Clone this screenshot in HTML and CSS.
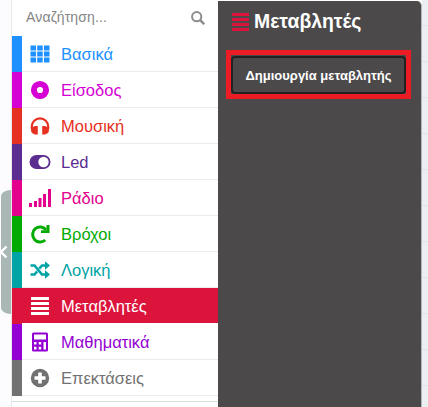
FILE: index.html
```html
<!DOCTYPE html>
<html lang="el">
<head>
<meta charset="utf-8">
<title>Μεταβλητές</title>
<link rel="stylesheet" href="styles.css">
</head>
<body>
<div class="editor">
  <aside class="gutter">
    <div class="collapse"><svg width="9" height="16" viewBox="0 0 9 16"><path d="M5.500 2.500L0 8l5.500 5.500" fill="none" stroke="#fff" stroke-width="2.400"/></svg></div>
  </aside>
  <nav class="toolbox">
    <div class="search"><span class="hint">Αναζήτηση...</span>
      <svg width="14" height="14" viewBox="0 0 14 14" fill="none" stroke="#8c8c8c"><circle cx="5.700" cy="5.700" r="4.600" stroke-width="2"/><path d="M9.200 9.200l4 4" stroke-width="2.400"/></svg>
    </div>
    <div class="row basic"><svg class="icon" viewBox="0 0 20 20"><path d="M0.500 1.500h5.500v5H0.500zM7.200 1.500h5.500v5H7.200zM14 1.500h5.500v5H14zM0.500 7.500h5.500v5H0.500zM7.200 7.500h5.500v5H7.200zM14 7.500h5.500v5H14zM0.500 13.500h5.500v5H0.500zM7.200 13.500h5.500v5H7.200zM14 13.500h5.500v5H14z"/></svg><span class="label">Βασικά</span></div>
    <div class="row input"><svg class="icon" viewBox="0 0 20 20"><circle cx="10" cy="10" r="6.100" fill="none" stroke="currentColor" stroke-width="6"/></svg><span class="label">Είσοδος</span></div>
    <div class="row music"><svg class="icon" viewBox="0 0 20 20"><path d="M1.800 13V10.500a8.200 8.200 0 0 1 16.400 0V13" fill="none" stroke="currentColor" stroke-width="2.200"/><path d="M7.800 10v8.500H6.500C3.400 18.500 1 16.600 1 14.200S3.400 10 6.500 10zM12.200 10v8.500h1.300c3.100 0 5.500-1.900 5.500-4.300S16.600 10 13.500 10z"/></svg><span class="label">Μουσική</span></div>
    <div class="row led"><svg class="icon wide" viewBox="0 0 22 20"><rect x="0.500" y="3" width="21" height="14" rx="7"/><circle cx="14.500" cy="10" r="5.200" fill="#fff"/></svg><span class="label">Led</span></div>
    <div class="row radio"><svg class="icon wide" viewBox="0 0 22 20"><path d="M0 15h3v4H0zM5 13h3v6H5zM9.500 10h3v9h-3zM14 6h3v13h-3zM19 1h3v18h-3z"/></svg><span class="label">Ράδιο</span></div>
    <div class="row loops"><svg class="icon" viewBox="0 0 20 20"><path d="M16 5.800A7.500 7.500 0 1 0 15.200 16" fill="none" stroke="currentColor" stroke-width="3"/><path d="M19.500 1v8h-8.500V6.300h5.500V1z"/></svg><span class="label">Βρόχοι</span></div>
    <div class="row logic"><svg class="icon" viewBox="0 0 20 20"><path d="M0.500 5.500H4.500L12 14.500h3.500M0.500 14.500H4.500l2.700-3.200M9.300 8.700L12 5.500h3.500" fill="none" stroke="currentColor" stroke-width="2.600"/><path d="M15 1.200l5 4.300-5 4.300zM15 10.200l5 4.300-5 4.300z"/></svg><span class="label">Λογική</span></div>
    <div class="row vars selected"><svg class="icon" viewBox="0 0 20 20"><path d="M1 1h18v3H1zM1 6h18v3H1zM1 11h18v3H1zM1 16h18v3H1z"/></svg><span class="label">Μεταβλητές</span></div>
    <div class="row math"><svg class="icon" viewBox="0 0 20 20"><path fill-rule="evenodd" d="M3.500 0.500h13a1.500 1.500 0 0 1 1.500 1.500v16a1.500 1.500 0 0 1-1.500 1.500h-13A1.500 1.500 0 0 1 2 18V2A1.500 1.500 0 0 1 3.500 0.500zM4 2.500v5h12v-5zM4 10v2.500h2.500V10zM8.700 10v2.500h2.500V10zM13.500 10v7.500H16V10zM4 14.800v2.700h2.500v-2.700zM8.700 14.800v2.700h2.500v-2.700z"/></svg><span class="label">Μαθηματικά</span></div>
    <div class="row more"><svg class="icon" viewBox="0 0 20 20"><circle cx="10" cy="10" r="9.200"/><path d="M10 4.500v11M4.500 10h11" stroke="#fff" stroke-width="3.600"/></svg><span class="label">Επεκτάσεις</span></div>
    <div class="rule"></div>
  </nav>
  <main class="flyout">
    <div class="heading"><svg width="17" height="19" viewBox="0 0 17 19"><path fill="#dc143c" d="M0 0h17v3H0zM0 5h17v3H0zM0 10h17v3H0zM0 15h17v3H0z"/></svg><span>Μεταβλητές</span></div>
    <div class="highlight"><button class="create">Δημιουργία μεταβλητής</button></div>
  </main>
  <div class="canvas"></div>
</div>
</body>
</html>
```
FILE: styles.css
```css
* { box-sizing: border-box; }
body { margin: 0; background: #fff; font-family: "Liberation Sans", Arial, sans-serif; }
.editor { display: flex; width: 428px; height: 407px; overflow: hidden; }
.gutter { width: 11px; padding: 190px 0 0 1px; background: #fcfcff; }
.collapse { display: flex; align-items: center; height: 124px; background: #a9b7b5; border-radius: 10px 0 0 10px / 6px 0 0 6px; }
.toolbox { width: 207px; border-left: 1px solid #e8e8e8; background: #fff; }
.search { display: flex; justify-content: space-between; height: 36px; padding: 11px 13px 0 14px; }
.hint { margin-top: -1px; font-size: 14px; line-height: 14px; letter-spacing: 0.15px; color: #858585; }
.row { display: flex; align-items: center; height: 36px; padding-left: 6px; border-left: 10px solid currentColor; background: linear-gradient(#ebebeb, #ebebeb) bottom / 100% 1px no-repeat; }
.icon { width: 20px; height: 20px; margin: 0 11px 0 2px; fill: currentColor; flex: none; }
.icon.wide { width: 22px; margin: 0 10px 0 1px; }
.label { font-size: 16.5px; line-height: 20px; white-space: nowrap; }
.basic { color: #1e90ff; }
.input { color: #d400d4; }
.music { color: #e63022; }
.led { color: #5c2d91; }
.radio { color: #e3008c; }
.loops { color: #00aa00; }
.logic { color: #00a4a6; }
.math { color: #9400d3; }
.more { color: #717171; }
.selected { color: #fff; border-left-color: #dc143c; background: linear-gradient(#dc143c, #dc143c) top / 100% 35px no-repeat; }
.rule { height: 6px; border-bottom: 1px solid #ddd; }
.flyout { width: 204px; margin-top: 1px; padding: 8px 0 0 8px; background: #4b4949; border-right: 1px solid #b5b8b8; border-radius: 0 5px 0 0; }
.heading { display: flex; gap: 5px; height: 41px; padding: 4px 0 0 6px; color: #fff; font-size: 19.4px; font-weight: bold; line-height: 18px; }
.heading span { margin-top: -1px; }
.highlight { width: 185px; height: 49px; padding: 1px 0 0; border: 5px solid #ed1c24; }
.create { display: block; width: 175px; height: 38px; padding: 0; border: 2px solid #222; border-radius: 4px; background: #4b4949; color: #fff; font: bold 13px "Liberation Sans", Arial, sans-serif; white-space: nowrap; }
.canvas { flex: 1; background: repeating-linear-gradient(transparent 0 25px, #e2e5e7 25px 26px, transparent 26px 36px) #eceff1; }
```
